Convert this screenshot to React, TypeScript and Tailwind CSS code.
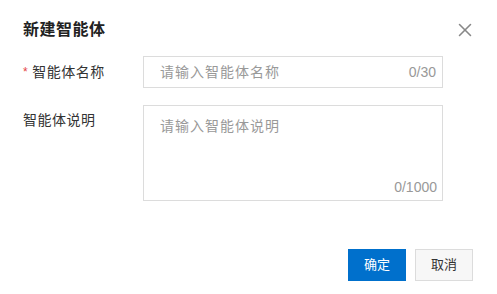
import React, { useState } from "react";
import { X } from "lucide-react";

export default function App() {
  const [name, setName] = useState("");
  const [desc, setDesc] = useState("");

  return (
    <div
      className="w-[497px] h-[294px] bg-white relative text-[#333]"
      style={{ fontFamily: '"Liberation Sans", "Noto Sans CJK SC", sans-serif' }}
    >
      {/* Header */}
      <div className="flex items-center justify-between pl-[23px] pr-[21px] pt-[18px]">
        <h2 className="text-[16px] font-bold leading-[22px] tracking-[0.5px] text-[#222]">新建智能体</h2>
        <button className="text-[#888] mt-[1px]">
          <X size={22} strokeWidth={1.7} />
        </button>
      </div>

      {/* Form */}
      <div className="mt-[15px] pl-[23px] pr-[54px] space-y-[17px]">
        <div className="flex items-center">
          <label className="w-[120px] text-[14px] tracking-[0.5px] flex items-center">
            <span className="text-[#e54545] mr-[4px] text-[12px]">*</span>
            智能体名称
          </label>
          <div className="flex-1 h-[32px] border border-[#dcdcdc] flex items-center pl-[16px] pr-[6px]">
            <input
              value={name}
              onChange={(e) => setName(e.target.value)}
              placeholder="请输入智能体名称"
              className="flex-1 min-w-0 outline-none text-[14px] tracking-[1px] placeholder:text-[#999] bg-transparent"
            />
            <span className="text-[14px] text-[#999]">0/30</span>
          </div>
        </div>

        <div className="flex items-start">
          <label className="w-[120px] text-[14px] tracking-[0.5px] pt-[5px]">智能体说明</label>
          <div className="flex-1 h-[96px] border border-[#dcdcdc] relative">
            <textarea
              value={desc}
              onChange={(e) => setDesc(e.target.value)}
              placeholder="请输入智能体说明"
              className="w-full h-full resize-none outline-none px-[16px] pt-[10px] text-[14px] tracking-[1px] placeholder:text-[#999]"
            />
            <span className="absolute right-[5px] bottom-[2px] text-[14px] text-[#999]">0/1000</span>
          </div>
        </div>
      </div>

      {/* Footer */}
      <div className="absolute right-[24px] bottom-[13px] flex gap-[9px]">
        <button className="w-[58px] h-[32px] bg-[#0070cc] text-white text-[13px]">确定</button>
        <button className="w-[58px] h-[32px] bg-[#f7f7f7] border border-[#dcdcdc] text-[#333] text-[13px]">取消</button>
      </div>
    </div>
  );
}
